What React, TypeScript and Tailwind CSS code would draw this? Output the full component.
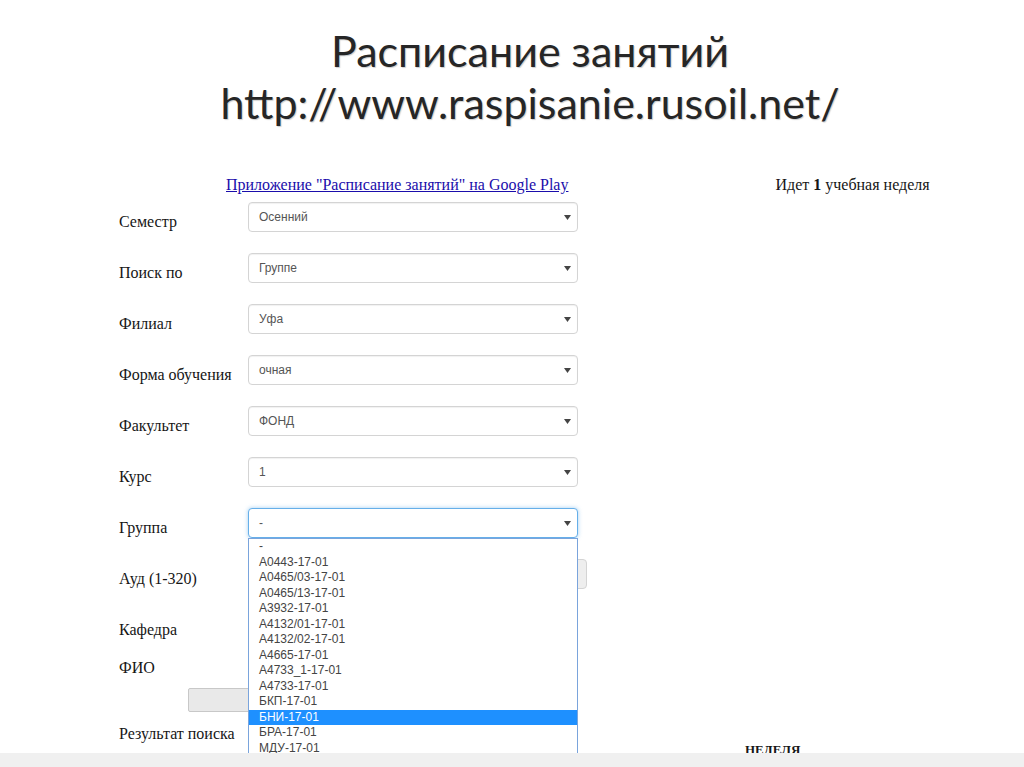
import React from 'react';

const rows = [
  { label: 'Семестр', value: 'Осенний' },
  { label: 'Поиск по', value: 'Группе' },
  { label: 'Филиал', value: 'Уфа' },
  { label: 'Форма обучения', value: 'очная' },
  { label: 'Факультет', value: 'ФОНД' },
  { label: 'Курс', value: '1' },
];

const groups = [
  '-',
  'А0443-17-01',
  'А0465/03-17-01',
  'А0465/13-17-01',
  'А3932-17-01',
  'А4132/01-17-01',
  'А4132/02-17-01',
  'А4665-17-01',
  'А4733_1-17-01',
  'А4733-17-01',
  'БКП-17-01',
  'БНИ-17-01',
  'БРА-17-01',
  'МДУ-17-01',
];

const Arrow = () => (
  <svg width="7" height="5" viewBox="0 0 7 5" className="shrink-0">
    <path d="M0 0 H7 L3.5 5 Z" fill="#444" />
  </svg>
);

const Select = ({ value, focused = false }: { value: string; focused?: boolean }) => (
  <div
    className={`w-[330px] h-[30px] rounded-[4px] border bg-white flex items-center justify-between pl-[10px] pr-[6px] ${
      focused
        ? 'border-[#66afe9] shadow-[0_0_4px_rgba(102,175,233,0.6)]'
        : 'border-[#d4d4d4] shadow-[inset_0_1px_1px_rgba(0,0,0,0.06)]'
    }`}
  >
    <span className="text-[12px] text-[#555] font-['Liberation_Sans',Arial,sans-serif]">{value}</span>
    <Arrow />
  </div>
);

const Label = ({ children }: { children: React.ReactNode }) => (
  <div className="w-[129px] pt-[10px] leading-[20px] text-[16px] text-[#161616] font-['Liberation_Serif','Times_New_Roman',serif] whitespace-nowrap">
    {children}
  </div>
);

export default function App() {
  return (
    <div className="w-[1024px] h-[767px] bg-white flex flex-col overflow-hidden">
      <div className="flex-1 overflow-hidden">
        {/* Slide title */}
        <div className="pt-[25px] pl-[36px] text-center text-[43px] leading-[52px] text-[#262626] font-['Lato','Open_Sans',sans-serif] [text-shadow:1px_1px_1px_rgba(0,0,0,0.2)]">
          <div>Расписание занятий</div>
          <div>http://www.raspisanie.rusoil.net/</div>
        </div>

        {/* Screenshot of the site form */}
        <div className="mt-[46px] pl-[119px] font-['Liberation_Serif','Times_New_Roman',serif]">
          <div className="flex items-center h-[20px] text-[16px]">
            <a href="#" className="ml-[107px] text-[#1a0dab] underline whitespace-nowrap">
              Приложение "Расписание занятий" на Google Play
            </a>
            <div className="ml-[207px] text-[#161616] whitespace-nowrap">
              Идет <b>1</b> учебная неделя
            </div>
          </div>

          <div className="mt-[7px] flex flex-col gap-[21px]">
            {rows.map((r) => (
              <div key={r.label} className="flex items-start">
                <Label>{r.label}</Label>
                <Select value={r.value} />
              </div>
            ))}

            <div className="flex items-start">
              <Label>Группа</Label>
              <div className="relative">
                <Select value="-" focused />
                <div className="absolute left-0 top-full w-[330px] h-[260px] bg-white border border-[#7aa4dc] z-10 font-['Liberation_Sans',Arial,sans-serif] text-[12px] text-[#444]">
                  {groups.map((g) => (
                    <div
                      key={g}
                      className={`h-[15.5px] leading-[15.5px] pl-[10px] ${
                        g === 'БНИ-17-01' ? 'bg-[#1e90ff] text-white' : ''
                      }`}
                    >
                      {g}
                    </div>
                  ))}
                </div>
              </div>
            </div>

            <div className="flex items-start">
              <Label>Ауд (1-320)</Label>
              <div className="w-[339px] h-[30px] rounded-[4px] border border-[#d4d4d4] bg-[#eeeeee]" />
            </div>
          </div>

          <div className="mt-[21px] flex items-start h-[38px]">
            <Label>Кафедра</Label>
          </div>
          <div className="flex items-start h-[40px]">
            <Label>ФИО</Label>
          </div>
          <div className="ml-[69px] w-[250px] h-[24px] bg-[#e9e9e9] border border-[#c8c8c8] rounded-[2px]" />
          <div className="mt-[2px] flex items-start">
            <Label>Результат поиска</Label>
          </div>
          <div className="ml-[626px] -mt-[2px] text-[13px] font-bold text-[#161616] leading-[16px]">НЕДЕЛЯ</div>
        </div>
      </div>
      <div className="h-[14px] bg-[#f0f0f0] shrink-0" />
    </div>
  );
}
